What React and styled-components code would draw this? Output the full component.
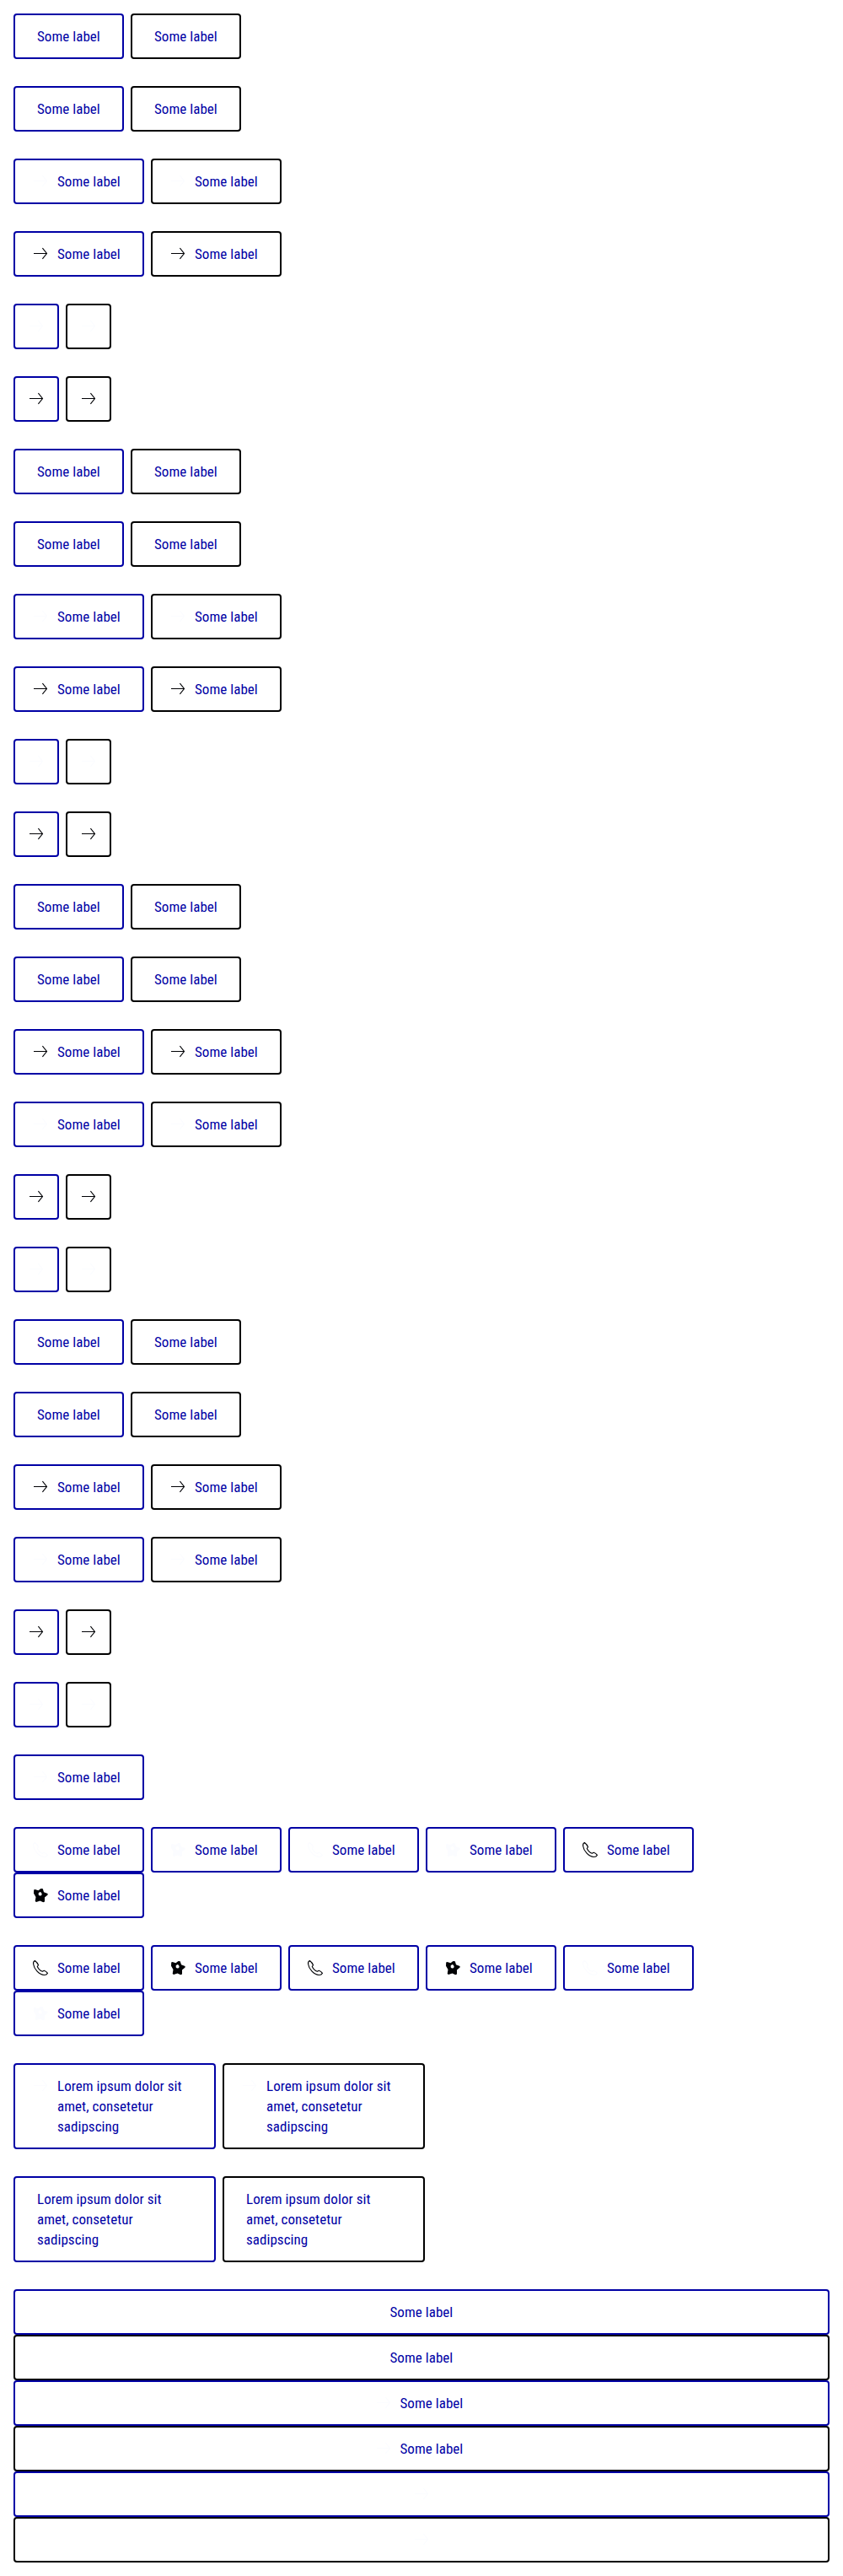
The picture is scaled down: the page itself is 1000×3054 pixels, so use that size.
import React from "react";
import styled, { createGlobalStyle } from "styled-components";

const BLUE = "#0000a5";
const BLACK = "#000";
const PALE = "#fbfcff";

const GlobalStyle = createGlobalStyle`
  html, body { margin: 0; background: #fff; }
`;

const Page = styled.main`
  padding: 16px;
  font: 400 17px/24px "Roboto Condensed", Roboto, "Liberation Sans", sans-serif;
`;

const Row = styled.div`
  display: flex;
  flex-wrap: wrap;
  column-gap: 8px;
  & + & { margin-top: 32px; }
`;

const LinkButton = styled.a`
  box-sizing: border-box;
  display: flex;
  justify-content: center;
  align-items: flex-start;
  gap: 8px;
  width: ${(p) => (p.$block ? "100%" : p.$long ? "240px" : "auto")};
  min-height: 54px;
  padding: ${(p) => (p.$iconOnly ? "13px" : p.$icon ? "13px 26px 13px 18px" : "13px 26px")};
  border: 2px solid ${(p) => (p.$black ? BLACK : BLUE)};
  border-radius: 4px;
  color: ${BLUE};
  text-decoration: none;
`;

const Label = styled.span`
  flex: ${(p) => (p.$long ? "0 0 160px" : "0 0 75px")};
  margin-right: ${(p) => (p.$long ? "auto" : 0)};
  white-space: ${(p) => (p.$long ? "normal" : "nowrap")};
  letter-spacing: 0.05px;
`;

const Glyph = styled.svg`
  flex: none;
  width: 24px;
  height: 24px;
  color: ${(p) => (p.$pale ? PALE : "#010205")};
`;

function Icon({ name, pale }) {
  return (
    <Glyph viewBox="0 0 24 24" $pale={pale} aria-hidden="true">
      {name === "arrow" && (
        <path
          d="M4 11.5h15.3M14.4 5.2l5.1 6.3-5.1 6.3"
          fill="none"
          stroke="currentColor"
          strokeWidth="1.1"
        />
      )}
      {name === "phone" && (
        <path
          d="M5.4 3.5C4 4.2 3.3 5.5 3.6 7.5C4.4 13.5 10.5 20.3 16.5 20.5C18.4 20.5 19.8 19.7 20.5 18.3Q18.7 16 16.3 15.3L14.3 16.3C12.3 15.6 9.3 12.6 8.3 10.5L9.5 8.7Q8.3 5.7 5.4 3.5Z"
          fill="none"
          stroke="currentColor"
          strokeWidth="1.15"
          strokeLinejoin="round"
        />
      )}
      {name === "star" && (
        <path
          fillRule="evenodd"
          fill="currentColor"
          d="M4.2 5.5L5.5 5L9.5 6.2L12.5 4L14.8 4.2L16 8.3L20.6 10L20.6 11.5L17 14.5L17 19.5L15.3 20.2L11.5 18.5L7 20L5.7 19L6.5 14L4 9.8ZM11.5 8L9.7 9.3L9.7 11.4L11 12.6L13 12.3L13.7 10.8L13 8.7Z"
        />
      )}
    </Glyph>
  );
}

function Item({ icon, pale, label = "Some label", black, block, long }) {
  return (
    <LinkButton $icon={!!icon} $iconOnly={!label} $black={black} $block={block} $long={long}>
      {icon && <Icon name={icon} pale={pale} />}
      {label && <Label $long={long}>{label}</Label>}
    </LinkButton>
  );
}

function Pair(props) {
  return (
    <Row>
      <Item {...props} />
      <Item {...props} black />
    </Row>
  );
}

const plain = {};
const paleIcon = { icon: "arrow", pale: true };
const darkIcon = { icon: "arrow" };
const paleOnly = { ...paleIcon, label: "" };
const darkOnly = { ...darkIcon, label: "" };

const paleFirst = [plain, plain, paleIcon, darkIcon, paleOnly, darkOnly];
const darkFirst = [plain, plain, darkIcon, paleIcon, darkOnly, paleOnly];
const pairs = [...paleFirst, ...paleFirst, ...darkFirst, ...darkFirst];

const sourcesA = [
  ["phone", true], ["star", true], ["phone", true],
  ["star", true], ["phone", false], ["star", false],
];
const sourcesB = [
  ["phone", false], ["star", false], ["phone", false],
  ["star", false], ["phone", true], ["star", true],
];

const lorem = "Lorem ipsum dolor sit amet, consetetur sadipscing";

export default function App() {
  return (
    <>
      <GlobalStyle />
      <Page>
        {pairs.map((p, i) => <Pair key={i} {...p} />)}
        <Row><Item {...paleIcon} /></Row>
        {[sourcesA, sourcesB].map((list, i) => (
          <Row key={i}>
            {list.map(([icon, pale], j) => <Item key={j} icon={icon} pale={pale} />)}
          </Row>
        ))}
        <Pair {...paleIcon} label={lorem} long />
        <Pair label={lorem} long />
        <Row>
          {[plain, paleIcon, paleOnly].map((p, i) => (
            <React.Fragment key={i}>
              <Item {...p} block />
              <Item {...p} block black />
            </React.Fragment>
          ))}
        </Row>
      </Page>
    </>
  );
}
